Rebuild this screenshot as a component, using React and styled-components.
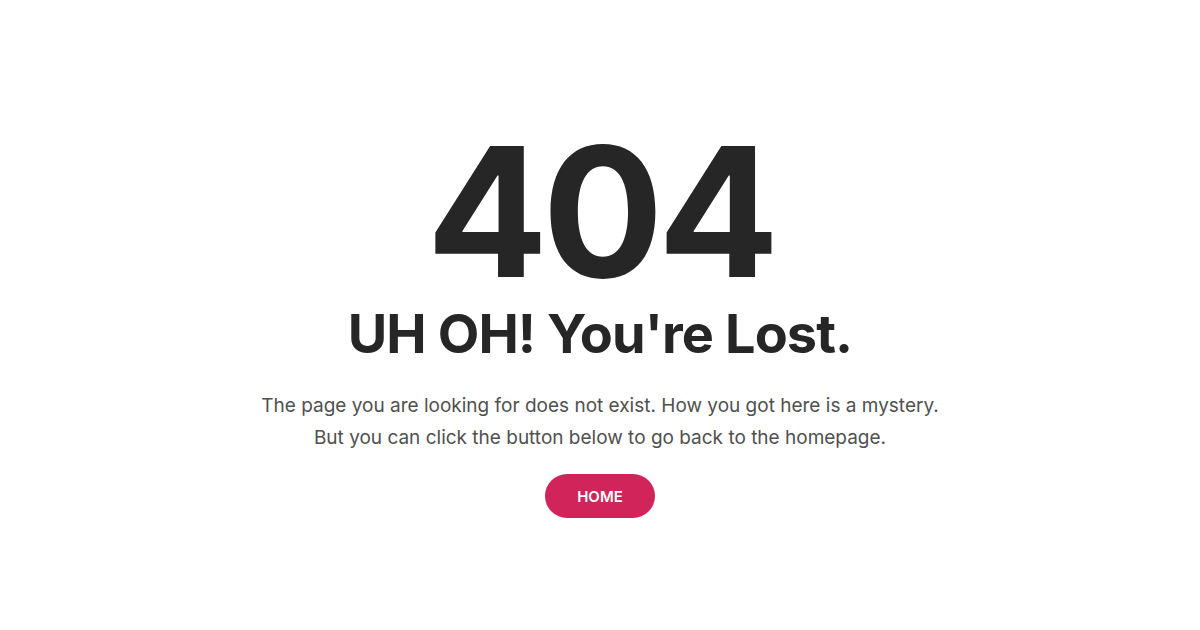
import React from 'react'
import styled, { createGlobalStyle } from 'styled-components'

const GlobalStyle = createGlobalStyle`
  html, body {
    margin: 0;
    padding: 0;
    background: #ffffff;
  }
  body {
    font-family: Inter, "Noto Sans", sans-serif;
    color: #262626;
  }
`

const Page = styled.main`
  min-height: 630px;
  box-sizing: border-box;
  padding-top: 124px;
  display: flex;
  flex-direction: column;
  align-items: center;
  text-align: center;
`

const Code = styled.h1`
  margin: 0;
  font-size: 180px;
  font-weight: 700;
  line-height: 176px;
  letter-spacing: -6px;
  color: #262626;
`

const Title = styled.h2`
  margin: 0;
  margin-top: 1px;
  font-size: 54px;
  font-weight: 700;
  line-height: 66px;
  letter-spacing: -0.9px;
  color: #262626;
`

const Text = styled.p`
  margin: 0;
  margin-top: 23px;
  font-size: 19px;
  font-weight: 400;
  line-height: 32px;
  color: #505050;
`

const HomeButton = styled.a`
  margin-top: 20px;
  display: inline-flex;
  align-items: center;
  justify-content: center;
  width: 110px;
  height: 44px;
  border-radius: 22px;
  background: #d1245a;
  color: #ffffff;
  font-size: 15px;
  font-weight: 600;
  text-decoration: none;
  text-transform: uppercase;
`

export default function App() {
  return (
    <>
      <GlobalStyle />
      <Page>
        <Code>404</Code>
        <Title>UH OH! You're Lost.</Title>
        <Text>
          The page you are looking for does not exist. How you got here is a mystery.
          <br />
          But you can click the button below to go back to the homepage.
        </Text>
        <HomeButton href="#">Home</HomeButton>
      </Page>
    </>
  )
}
